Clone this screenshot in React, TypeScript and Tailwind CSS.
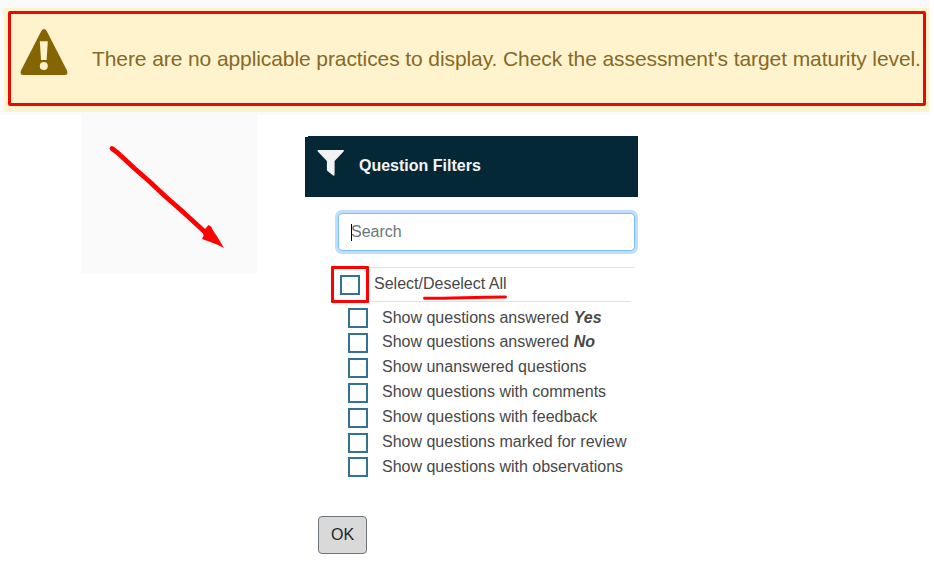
import type { ReactNode } from "react";

const filters: { label: ReactNode; box: string; text: string }[] = [
  { label: <>Show questions answered <b className="ml-[0.5px]"><i>Yes</i></b></>, box: "mt-[7px]", text: "mt-[5px]" },
  { label: <>Show questions answered <b className="ml-[0.5px]"><i>No</i></b></>, box: "mt-[7px]", text: "mt-[4px]" },
  { label: "Show unanswered questions", box: "mt-[7px]", text: "mt-[4px]" },
  { label: "Show questions with comments", box: "mt-[7px]", text: "mt-[4px]" },
  { label: "Show questions with feedback", box: "mt-[7px]", text: "mt-[4px]" },
  { label: "Show questions marked for review", box: "mt-[7px]", text: "mt-[4px]" },
  { label: "Show questions with observations", box: "mt-[6px]", text: "mt-[4px]" },
];

function Checkbox({ className = "" }: { className?: string }) {
  return (
    <span
      role="checkbox"
      aria-checked="false"
      className={`block size-5 shrink-0 border-2 border-[#337195] bg-white ${className}`}
    />
  );
}

function Alert() {
  return (
    <header className="h-[115px] w-[930px] bg-[#fafafa] pt-2 pl-1">
      <div className="h-[104px] w-[925px] bg-[#fff3cd] pt-[3px] pl-1">
        <div className="flex h-[95px] w-[918px] rounded-[2px] border-[3px] border-[#e60c04]">
          <svg viewBox="0 0 48 47" className="mt-[15px] ml-[9px] h-[47px] w-12 shrink-0">
            <path
              d="M21.3 2Q24-1.8 26.7 2L47 41.5Q48.5 45.7 45 46H3Q-.5 45.7 1 41.5Z"
              fill="#856404"
            />
            <path d="M19.8 12.2h8L26.6 31h-5.6Z" fill="#fff3cd" />
            <circle cx="23.8" cy="37" r="4" fill="#fff3cd" />
          </svg>
          <p className="mt-[30px] ml-[24px] text-[21px] leading-[30px] tracking-[-0.09px] whitespace-nowrap text-[#856928]">
            There are no applicable practices to display. Check the assessment's target maturity level.
          </p>
        </div>
      </div>
    </header>
  );
}

export default function App() {
  return (
    <main className="h-[562px] w-[934px] overflow-hidden bg-white font-['Liberation_Sans',Arial,sans-serif] text-base text-[#484848]">
      <Alert />
      <div className="flex items-start pl-[81px]">
        <div className="h-[159px] w-[176px] bg-[#fafafa]">
          <svg viewBox="81 115 176 159" className="h-[159px] w-[176px]" fill="#f00">
            <path
              d="M112 148.5 118 153 134 168 150 182 166 197 182 211 206 233"
              fill="none"
              stroke="#f00"
              strokeWidth="4.8"
              strokeLinecap="round"
            />
            <path d="M208.5 225 211.5 227 213 230.5 216.5 235.5 224 248 218 245 210.5 242 202 239 203.5 236 203 231.5Z" />
          </svg>
        </div>

        <section className="mt-[21px] ml-12 w-[333px]">
          <h1 className="flex h-[61px] items-start bg-[#052836] text-base font-bold text-[#f4f4f4] [clip-path:polygon(3px_0,100%_0,100%_100%,0_100%,0_1px,3px_1px)]">
            <svg viewBox="0 0 28 27" className="mt-[13px] ml-3 h-[27px] w-7" fill="#f2f2f2">
              <path d="M1 1h25.4q1 .4.2 1.5L17.6 12V26.2q-1 .8-1.8.1L9.9 21.5V12L.8 2.4Q.2 1.4 1 1Z" />
            </svg>
            <span className="mt-[18px] ml-[14px] leading-6">Question Filters</span>
          </h1>

          <div className="mt-4 ml-[33px] flex h-[38px] w-[297px] items-center rounded border border-[#80bdff] bg-white pl-3 text-[#6c757d] ring-[3px] ring-[#bfdeff]">
            <span className="h-[17px] w-px bg-black" />
            <span className="-ml-px leading-6">Search</span>
          </div>

          <div className="mt-[15px] ml-[26px] flex h-[37px] w-[304px]">
            <div className="h-[37px] w-[38px] shrink-0 rounded-[1px] border-[3px] border-[#fe0000]">
              <Checkbox className="mt-[6px] ml-[6px]" />
            </div>
            <div className="mt-px flex h-[35px] grow flex-col">
              <div className="h-px bg-[#e2e2e2]" />
              <div className="flex h-[33px] pt-1 pl-[5px] leading-6">
                <span>Select/</span>
                <span className="flex flex-col">
                  Deselect All
                  <svg viewBox="0 0 84 5" className="-mt-[1px] h-[5px] w-[84px] shrink-0">
                    <path d="M1.5 3.2C25 3.3 45 2.4 82.5 2" fill="none" stroke="#fe0000" strokeWidth="2.9" strokeLinecap="round" />
                  </svg>
                </span>
              </div>
              <div className="h-px w-[262px] bg-[#e2e2e2]" />
            </div>
          </div>

          <ul className="-mt-0.5 ml-[43px]">
            {filters.map((filter, index) => (
              <li key={index} className="flex h-[25px]">
                <Checkbox className={filter.box} />
                <span className={`ml-[14px] leading-6 whitespace-nowrap ${filter.text}`}>{filter.label}</span>
              </li>
            ))}
          </ul>

          <button className="mt-10 ml-[13px] flex h-[38px] w-[49px] items-center justify-center rounded border border-[#6c757d] bg-[#d9d9d9] leading-6 text-[#212529]">
            OK
          </button>
        </section>
      </div>
    </main>
  );
}
